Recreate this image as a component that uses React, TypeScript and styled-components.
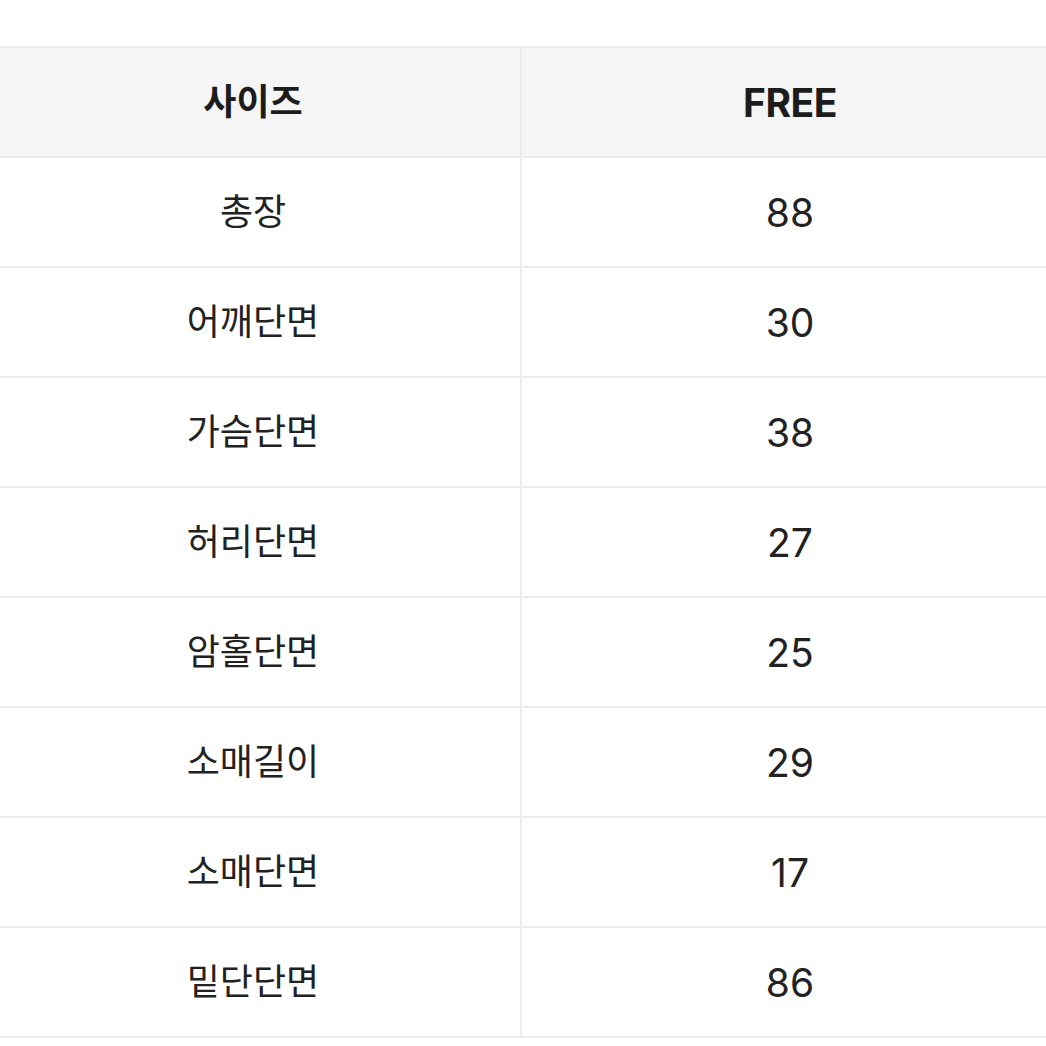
import React from "react";
import styled, { createGlobalStyle } from "styled-components";

const GlobalStyle = createGlobalStyle`
  html, body { margin: 0; padding: 0; background: #ffffff; }
  body { font-family: Inter, "Noto Sans CJK KR", sans-serif; overflow: hidden; }
`;

const Page = styled.div`
  width: 1046px;
  height: 1046px;
  padding-top: 46px;
  box-sizing: border-box;
  overflow: hidden;
`;

const Table = styled.div`
  display: grid;
  grid-template-columns: 536px 536px;
  margin-left: -14px;
  width: 1072px;
  border-top: 2px solid #ececec;
`;

const Cell = styled.div<{ $head?: boolean; $left?: boolean }>`
  height: 110px;
  box-sizing: border-box;
  display: flex;
  align-items: center;
  justify-content: center;
  border-bottom: 2px solid #ececec;
  border-right: ${(p) => (p.$left ? "2px solid #ececec" : "none")};
  background: ${(p) => (p.$head ? "#f5f5f5" : "#ffffff")};
  color: ${(p) => (p.$head ? "#1c1c1c" : "#222222")};
  font-size: ${(p) => (p.$left ? "36px" : "39px")};
  font-weight: ${(p) => (p.$head ? 700 : 400)};
  letter-spacing: ${(p) => (p.$head && !p.$left ? "-0.5px" : "0")};
  line-height: 1;
`;

const rows: [string, string][] = [
  ["총장", "88"],
  ["어깨단면", "30"],
  ["가슴단면", "38"],
  ["허리단면", "27"],
  ["암홀단면", "25"],
  ["소매길이", "29"],
  ["소매단면", "17"],
  ["밑단단면", "86"],
];

export default function App() {
  return (
    <Page>
      <GlobalStyle />
      <Table>
        <Cell $head $left>사이즈</Cell>
        <Cell $head>FREE</Cell>
        {rows.map(([k, v]) => (
          <React.Fragment key={k}>
            <Cell $left>{k}</Cell>
            <Cell>{v}</Cell>
          </React.Fragment>
        ))}
      </Table>
    </Page>
  );
}
